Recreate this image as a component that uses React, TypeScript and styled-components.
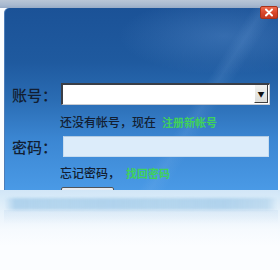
import React from "react";
import styled, { createGlobalStyle } from "styled-components";

const Global = createGlobalStyle`
  html, body { margin: 0; padding: 0; background: #fbfdff; }
  body { font-family: "Noto Sans CJK SC", "Noto Sans", sans-serif; }
`;

const Page = styled.div`
  width: 280px;
  height: 270px;
  overflow: hidden;
  display: flex;
  flex-direction: column;
  background: #fbfdff;
`;

const TopStrip = styled.div`
  height: 8px;
  flex: none;
  background: linear-gradient(180deg, #b9c6d6 0%, #a9bad0 60%, #97abc6 100%);
`;

const Window = styled.div`
  position: relative;
  flex: none;
  height: 182px;
  margin: 0 2px 0 4px;
  border-radius: 5px 0 0 0;
  background:
    radial-gradient(ellipse 150px 55px at 220px 28px, rgba(110, 160, 220, 0.3), rgba(110, 160, 220, 0) 70%),
    linear-gradient(122deg, rgba(255,255,255,0) 64%, rgba(140,185,235,0.14) 67%, rgba(255,255,255,0) 71%),
    linear-gradient(180deg, #1b5297 0%, #1f5a9f 30%, #2a6cb3 50%, #3b86d2 72%, #4a9ae6 100%);
  box-shadow: inset 1px 0 0 #4d7db8;
`;

const CloseButton = styled.button`
  position: absolute;
  top: -2px;
  right: 0;
  width: 18px;
  height: 13px;
  padding: 0;
  border: 1px solid #a8321c;
  border-radius: 2px;
  background: linear-gradient(180deg, #ee6a4c 0%, #d8452a 55%, #c43a22 100%);
  display: flex;
  align-items: center;
  justify-content: center;
`;

const Content = styled.div`
  height: 100%;
  overflow: hidden;
  padding: 75px 0 0 8px;
  box-sizing: border-box;
  display: flex;
  flex-direction: column;
  border-radius: 5px 0 0 0;
`;

const FieldRow = styled.div<{ $mt?: number; $h: number }>`
  display: flex;
  align-items: center;
  height: ${(p) => p.$h}px;
  margin-top: ${(p) => p.$mt ?? 0}px;
`;

const Label = styled.span`
  width: 49px;
  flex: none;
  font-size: 15px;
  line-height: 15px;
  color: #121e32;
  font-weight: 500;
`;

const Combo = styled.div`
  width: 209px;
  height: 22px;
  box-sizing: border-box;
  background: #ffffff;
  border-top: 2px solid #3a3e46;
  border-left: 2px solid #3a3e46;
  border-right: 1px solid #c8ccd2;
  border-bottom: 1px solid #c8ccd2;
  display: flex;
  justify-content: flex-end;
  align-items: stretch;
  padding: 0 1px 1px 0;
`;

const DropButton = styled.div`
  width: 14px;
  box-sizing: border-box;
  background: linear-gradient(180deg, #f2f2f0 0%, #dcdcd8 100%);
  border-left: 1px solid #ffffff;
  border-right: 1px solid #404040;
  border-bottom: 1px solid #404040;
  display: flex;
  align-items: center;
  justify-content: center;
  font-size: 7px;
  color: #111;
`;

const Password = styled.div`
  width: 206px;
  height: 21px;
  margin-left: 2px;
  box-sizing: border-box;
  background: #dcecfa;
  border: 1px solid #c6dcf0;
  border-top-color: #b3cbe2;
`;

const Hint = styled.div<{ $mt: number }>`
  margin-top: ${(p) => p.$mt}px;
  padding-left: 48px;
  height: 14px;
  display: flex;
  align-items: center;
  font-size: 12px;
  line-height: 14px;
  color: #121e32;
  font-weight: 500;
  white-space: nowrap;
`;

const Link = styled.span`
  color: #3fd25a;
  font-size: 11px;
  font-weight: 700;
  margin-left: 6px;
`;

const LoginButton = styled.div`
  margin-top: 7px;
  margin-left: 49px;
  width: 53px;
  height: 22px;
  flex: none;
  box-sizing: border-box;
  border: 1px solid #50545a;
  border-radius: 2px;
  background: #e6ecf2;
`;

const Reflection = styled.div`
  flex: 1;
  display: flex;
  flex-direction: column;
  background: linear-gradient(180deg, #d2e6f7 0%, #d7eaf8 8%, #e9f3fb 30%, #f6fafe 50%, #fbfdff 70%);
`;

const MirrorBand = styled.div`
  margin-top: 8px;
  height: 12px;
  margin-left: 4px;
  margin-right: 2px;
  background:
    linear-gradient(90deg, rgba(160,200,230,0) 0%, rgba(145,192,228,0.7) 4%, rgba(160,202,232,0.8) 20%, rgba(145,192,228,0.7) 40%, rgba(160,202,232,0.8) 60%, rgba(145,192,228,0.7) 80%, rgba(160,200,230,0.6) 96%, rgba(160,200,230,0) 100%);
  filter: blur(1.5px);
  opacity: 0.85;
`;

const MirrorFade = styled.div`
  height: 14px;
  margin: 0 2px 0 4px;
  background: linear-gradient(180deg, rgba(210,228,244,0.6), rgba(240,246,252,0));
`;

export default function App() {
  return (
    <Page>
      <Global />
      <TopStrip />
      <Window>
        <CloseButton aria-label="关闭">
          <svg width="10" height="9" viewBox="0 0 10 9">
            <path d="M2 1.5 L8 7.5 M8 1.5 L2 7.5" stroke="#ffffff" strokeWidth="2" strokeLinecap="round" />
          </svg>
        </CloseButton>
        <Content>
          <FieldRow $h={22}>
            <Label>账号：</Label>
            <Combo>
              <DropButton>▼</DropButton>
            </Combo>
          </FieldRow>
          <Hint $mt={10}>
            还没有帐号，现在<Link>注册新帐号</Link>
          </Hint>
          <FieldRow $mt={7} $h={21}>
            <Label>密码：</Label>
            <Password />
          </FieldRow>
          <Hint $mt={9}>
            忘记密码，<Link>找回密码</Link>
          </Hint>
          <LoginButton />
        </Content>
      </Window>
      <Reflection>
        <MirrorBand />
        <MirrorFade />
      </Reflection>
    </Page>
  );
}
